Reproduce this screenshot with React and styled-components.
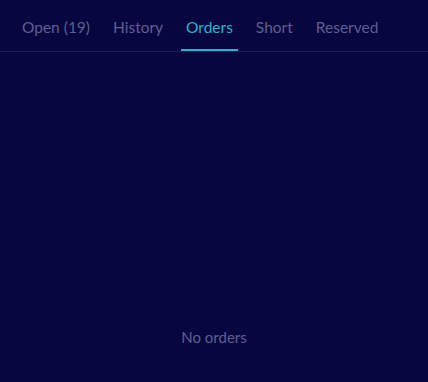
import React, { useState } from "react";
import styled, { createGlobalStyle } from "styled-components";

const Global = createGlobalStyle`
  html, body { margin: 0; padding: 0; background: #08063f; }
  body { font-family: Lato, "Open Sans", sans-serif; }
`;

const Page = styled.div`
  width: 428px;
  height: 382px;
  background: #08063f;
  display: flex;
  flex-direction: column;
`;

const TabBar = styled.div`
  display: flex;
  align-items: stretch;
  height: 51px;
  padding-left: 17px;
  gap: 13px;
  border-bottom: 1px solid #1f1e57;
`;

const Tab = styled.button`
  appearance: none;
  background: none;
  border: none;
  margin: 0;
  padding: 3px 5px 0;
  font-family: Lato, "Open Sans", sans-serif;
  font-size: 15.5px;
  color: ${(p) => (p.$active ? "#2bb3cc" : "#5f5e90")};
  position: relative;
  cursor: pointer;
  display: flex;
  align-items: center;
  &::after {
    content: "";
    position: absolute;
    left: 0;
    right: 0;
    bottom: 0;
    height: 2px;
    background: ${(p) => (p.$active ? "#2bb3cc" : "transparent")};
  }
`;

const Body = styled.div`
  flex: 1;
  display: flex;
  align-items: flex-end;
  justify-content: center;
  padding-bottom: 36px;
`;

const Empty = styled.div`
  font-size: 15px;
  color: #5f5e90;
`;

const tabs = ["Open (19)", "History", "Orders", "Short", "Reserved"];

export default function App() {
  const [active, setActive] = useState(2);
  return (
    <Page>
      <Global />
      <TabBar>
        {tabs.map((t, i) => (
          <Tab key={t} $active={i === active} onClick={() => setActive(i)}>
            {t}
          </Tab>
        ))}
      </TabBar>
      <Body>
        <Empty>No orders</Empty>
      </Body>
    </Page>
  );
}
